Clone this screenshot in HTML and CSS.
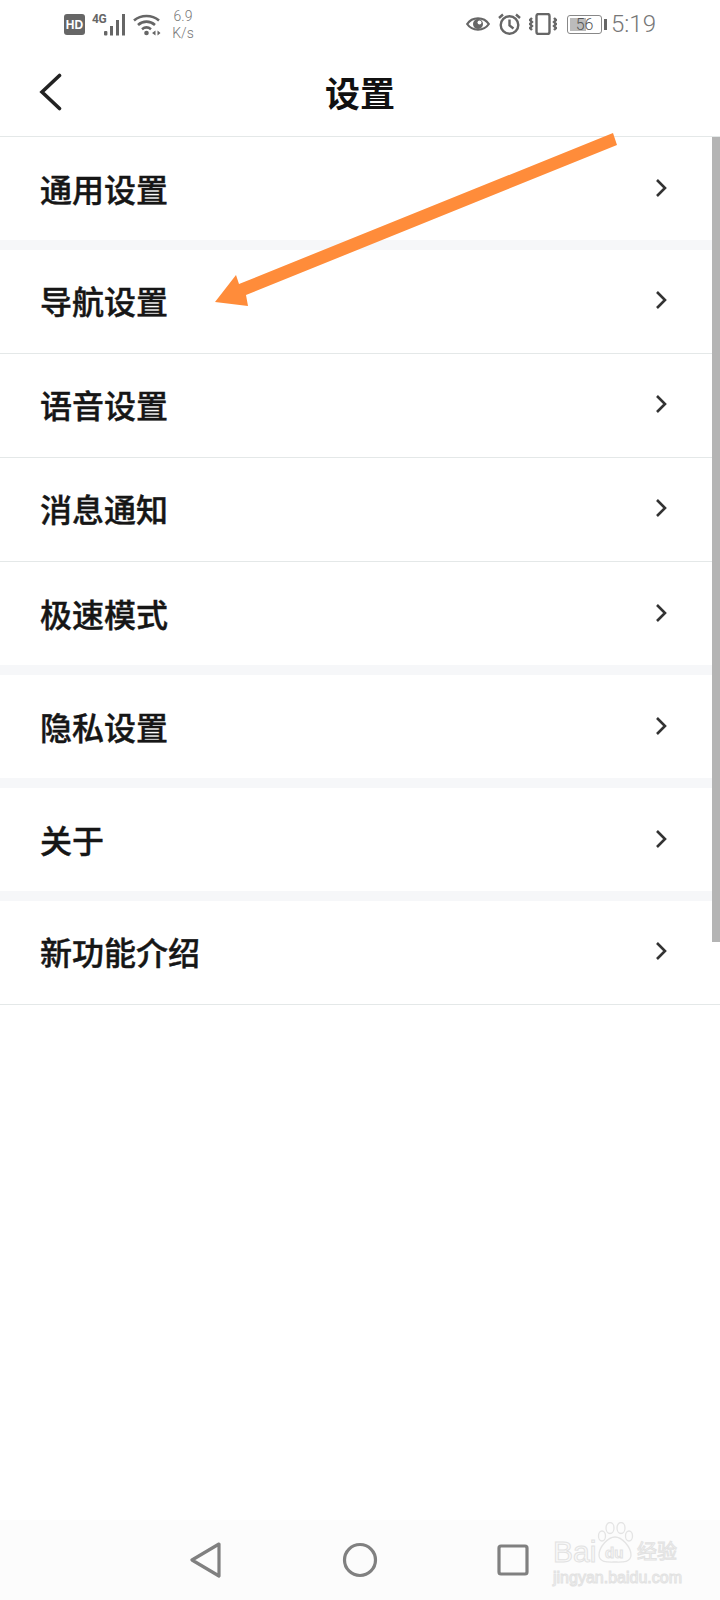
FILE: index.html
```html
<!DOCTYPE html>
<html lang="zh-CN">
<head>
    <meta charset="UTF-8">
    <meta name="viewport" content="width=device-width, initial-scale=1.0">
    <title>设置</title>
    <link rel="stylesheet" href="styles.css">
</head>
<body>

<div class="phone">
    <div class="status-bar">
        <div class="status-left">
            <svg class="ic-hd" width="21" height="21" viewBox="0 0 21 21">
                <rect width="21" height="21" rx="3" fill="#666"/>
                <text x="10.5" y="15" text-anchor="middle" class="hd-text">HD</text>
            </svg>
            <span class="net-type">4G</span>
            <svg class="ic-signal" width="22" height="22" viewBox="0 0 22 22" fill="#666">
                <rect x="0" y="17" width="3.4" height="4.5" rx="1"/>
                <rect x="6" y="12" width="3" height="9.5"/>
                <rect x="12" y="6" width="3" height="15.500"/>
                <rect x="18" y="0" width="3" height="21.500"/>
            </svg>
            <svg class="ic-wifi" width="28" height="22" viewBox="0 0 28 22" fill="none" stroke="#666" stroke-width="2.600">
                <path d="M1 6.500C8 .5 19 .5 26 6.500"/>
                <path d="M5 11C10 6.500 17 6.500 22 11"/>
                <path d="M9 15.200C12 12.800 15 12.800 18 15.200"/>
                <circle cx="13.500" cy="19" r="2.300" fill="#666" stroke="none"/>
                <path d="M19 19l3.500-2.500v5zM27.500 19l-3-2.500v5z" fill="#666" stroke="none"/>
            </svg>
            <div class="speed">6.9<br>K/s</div>
        </div>
        <div class="status-right">
            <svg width="24" height="18" viewBox="0 0 24 18" fill="none" stroke="#666" stroke-width="2.200">
                <path d="M1.200 9C6 1.500 18 1.500 22.800 9C18 16.500 6 16.500 1.200 9Z"/>
                <circle cx="12" cy="9" r="5" fill="#666" stroke="none"/>
                <circle cx="13.500" cy="7.500" r="2" fill="#fff" stroke="none"/>
            </svg>
            <svg width="23" height="22" viewBox="0 0 23 22" fill="none" stroke="#666" stroke-width="2.400">
                <circle cx="11.500" cy="12" r="8.800"/>
                <path d="M11.500 6.500V12.500L15.500 15.500"/>
                <path d="M1 5L5 1.500M22 5L18 1.500"/>
            </svg>
            <svg width="28" height="22" viewBox="0 0 28 22" fill="none" stroke="#666" stroke-width="2.400">
                <rect x="7.500" y="1" width="13" height="20" rx="2"/>
                <path d="M3 5l-2 2 2 2-2 2 2 2-2 2 2 2M25 5l2 2-2 2 2 2-2 2 2 2-2 2"/>
            </svg>
            <div class="battery">
                <div class="battery-box">
                    <div class="battery-fill"></div>
                    <span class="battery-num">56</span>
                </div>
                <div class="battery-nub"></div>
            </div>
            <span class="clock">5:19</span>
        </div>
    </div>

    <header class="title-bar">
        <svg class="back" width="24" height="38" viewBox="0 0 24 38" fill="none" stroke="#222" stroke-width="3.600" stroke-linecap="round">
            <path d="M20.500 2.500L3 19L20.500 35.500"/>
        </svg>
        <h1 class="title">设置</h1>
    </header>

    <main class="settings">
        <a class="row gap-after">通用设置<svg class="chev" viewBox="0 0 12 20"><path d="M2 2l8 8-8 8"/></svg></a>
        <a class="row">导航设置<svg class="chev" viewBox="0 0 12 20"><path d="M2 2l8 8-8 8"/></svg></a>
        <a class="row">语音设置<svg class="chev" viewBox="0 0 12 20"><path d="M2 2l8 8-8 8"/></svg></a>
        <a class="row">消息通知<svg class="chev" viewBox="0 0 12 20"><path d="M2 2l8 8-8 8"/></svg></a>
        <a class="row gap-after">极速模式<svg class="chev" viewBox="0 0 12 20"><path d="M2 2l8 8-8 8"/></svg></a>
        <a class="row gap-after">隐私设置<svg class="chev" viewBox="0 0 12 20"><path d="M2 2l8 8-8 8"/></svg></a>
        <a class="row gap-after">关于<svg class="chev" viewBox="0 0 12 20"><path d="M2 2l8 8-8 8"/></svg></a>
        <a class="row">新功能介绍<svg class="chev" viewBox="0 0 12 20"><path d="M2 2l8 8-8 8"/></svg></a>
    </main>

    <div class="nav-bar">
        <svg width="34" height="36" viewBox="0 0 34 36" fill="none" stroke="#808080" stroke-width="3.200" stroke-linejoin="round">
            <path d="M30 2L3 18L30 34Z"/>
        </svg>
        <svg width="36" height="36" viewBox="0 0 36 36" fill="none" stroke="#808080" stroke-width="3.200">
            <circle cx="18" cy="18" r="15.500"/>
        </svg>
        <svg width="32" height="32" viewBox="0 0 32 32" fill="none" stroke="#808080" stroke-width="3.200" stroke-linejoin="round">
            <rect x="2" y="2" width="28" height="28" rx="2"/>
        </svg>
    </div>

    <div class="scroll-thumb"></div>

    <!-- annotation arrow drawn over the list -->
    <svg class="arrow" width="720" height="320" viewBox="0 0 720 320">
        <path d="M613 133L617 145L246 295L248 306L215 302L236 275L239 284Z" fill="#ff8c3a"/>
    </svg>

    <div class="watermark">
        <svg class="paw" width="38" height="42" viewBox="0 0 38 42" fill="none" stroke="#e4e4e4" stroke-width="1.300">
            <ellipse cx="6" cy="14" rx="3.500" ry="5"/>
            <ellipse cx="14" cy="6" rx="4" ry="5.500"/>
            <ellipse cx="25" cy="6" rx="4" ry="5.500"/>
            <ellipse cx="33" cy="14" rx="3.500" ry="5"/>
            <path d="M3 33C3 25 12 15 19 15C26 15 35 25 35 33C35 41 25 40 19 40C13 40 3 41 3 33Z"/>
        </svg>
        <span class="wm-bai">Bai</span>
        <span class="wm-du">du</span>
        <span class="wm-cn">经验</span>
        <div class="wm-url">jingyan.baidu.com</div>
    </div>
</div>

</body>
</html>
```

FILE: styles.css
```css
* {
    box-sizing: border-box;
}

body {
    margin: 0;
    background: #fff;
    font-family: "Noto Sans CJK SC", "Liberation Sans", sans-serif;
}

.phone {
    position: relative;
    width: 720px;
    height: 1600px;
    overflow: hidden;
    display: flex;
    flex-direction: column;
    background: #fff;
}

/* status bar */
.status-bar {
    height: 48px;
    padding: 0 64px 0 64px;
    display: flex;
    justify-content: space-between;
    align-items: center;
    color: #666;
}

.status-left {
    display: flex;
    align-items: center;
    margin-top: 1px;
}

.hd-text {
    font: bold 12px "Liberation Sans", sans-serif;
    fill: #fff;
}

.net-type {
    font: bold 12px "Roboto", sans-serif;
    margin: -12px 0 0 7px;
    width: 13px;
    letter-spacing: -0.5px;
}

.ic-signal {
    margin-left: -1px;
}

.ic-wifi {
    margin-left: 7px;
}

.speed {
    margin-left: 10px;
    font: 300 14px/17px "Roboto", sans-serif;
    color: #777;
    text-align: center;
    width: 24px;
}

.status-right {
    display: flex;
    align-items: center;
    gap: 8px;
}

.battery {
    display: flex;
    align-items: center;
    gap: 2px;
    margin-left: 2px;
}

.battery-box {
    position: relative;
    width: 35px;
    height: 19px;
    border: 1px solid #888;
    border-radius: 3px;
    padding: 2px;
}

.battery-fill {
    width: 56%;
    height: 100%;
    background: #bbb;
}

.battery-num {
    position: absolute;
    inset: 0;
    text-align: center;
    font: 300 16px/17px "Roboto", sans-serif;
    color: #555;
}

.battery-nub {
    width: 3px;
    height: 11px;
    background: #666;
}

.clock {
    font: 300 24px "Roboto", sans-serif;
    color: #777;
    margin-left: -4px;
}

/* title bar */
.title-bar {
    position: relative;
    height: 89px;
    display: flex;
    align-items: center;
    justify-content: center;
    border-bottom: 1px solid #e4e8e8;
}

.back {
    position: absolute;
    left: 39px;
    top: 25px;
}

.title {
    margin: 0;
    font-size: 35px;
    font-weight: 700;
    line-height: 1;
    color: #111;
    padding-bottom: 2px;
}

/* settings list */
.row {
    height: 104px;
    padding: 0 53px 3px 40px;
    display: flex;
    align-items: center;
    justify-content: space-between;
    font-size: 32px;
    font-weight: 500;
    -webkit-text-stroke: 0.4px #161616;
    color: #161616;
    border-bottom: 1px solid #e4e8e8;
}

.gap-after {
    height: 113px;
    padding-bottom: 1px;
    border-bottom: 10px solid #f6f7f9;
}

.chev {
    width: 12px;
    height: 20px;
    fill: none;
    stroke: #333;
    stroke-width: 2.600;
}

/* bottom nav */
.nav-bar {
    position: absolute;
    left: 0;
    right: 0;
    bottom: 0;
    height: 80px;
    background: #fcfcfc;
    display: flex;
    align-items: center;
    padding-left: 189px;
    gap: 119px;
}

/* overlays */
.scroll-thumb {
    position: absolute;
    right: 0;
    top: 137px;
    width: 8px;
    height: 805px;
    background: #b4b4b4;
}

.arrow {
    position: absolute;
    left: 0;
    top: 0;
}

.watermark {
    position: absolute;
    left: 552px;
    top: 1522px;
    width: 135px;
    height: 70px;
    color: #f9f9f9;
    -webkit-text-stroke: 1px #e2e2e2;
}

.paw {
    position: absolute;
    left: 44px;
    top: 0;
}

.wm-bai {
    position: absolute;
    left: 1px;
    top: 13px;
    font: 400 30px/34px "Liberation Sans", sans-serif;
}

.wm-du {
    position: absolute;
    left: 53px;
    top: 21px;
    font: 700 15px/20px "Liberation Sans", sans-serif;
}

.wm-cn {
    position: absolute;
    left: 85px;
    top: 14px;
    font-size: 20px;
    line-height: 30px;
    font-weight: 400;
}

.wm-url {
    position: absolute;
    left: 1px;
    top: 47px;
    font: 400 16px/18px "Liberation Sans", sans-serif;
    white-space: nowrap;
}
```
